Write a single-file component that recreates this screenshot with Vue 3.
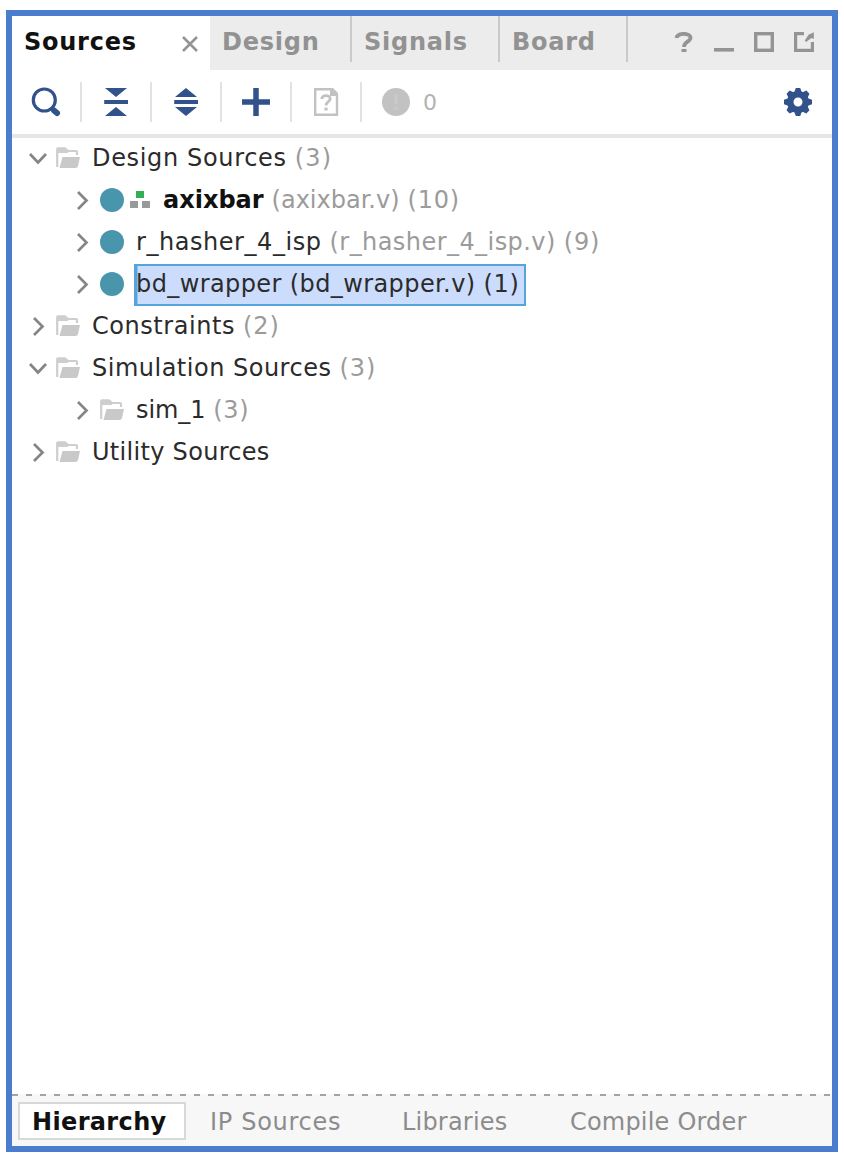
<script setup>
const tabs = [
  { label: 'Sources', cls: 'active' },
  { label: 'Design', cls: 'design' },
  { label: 'Signals', cls: 'signals' },
  { label: 'Board', cls: 'board' },
]

const rows = [
  { level: 0, open: true, icon: 'folder', name: 'Design Sources', ls: 0.66, counts: [{ t: '(3)', ls: 1.2 }] },
  { level: 1, icon: 'module', top: true, name: 'axixbar', ls: 0, counts: [{ t: '(axixbar.v)', ls: 0 }, { t: '(10)', ls: 0.8 }] },
  { level: 1, icon: 'module', name: 'r_hasher_4_isp', ls: 0.55, counts: [{ t: '(r_hasher_4_isp.v)', ls: 0.44 }, { t: '(9)', ls: 0.8 }] },
  { level: 1, icon: 'module', selected: true, name: 'bd_wrapper', ls: 0.4, counts: [{ t: '(bd_wrapper.v)', ls: 0.4 }, { t: '(1)', ls: 0.7 }] },
  { level: 0, icon: 'folder', name: 'Constraints', ls: 0.55, counts: [{ t: '(2)', ls: 1 }] },
  { level: 0, open: true, icon: 'folder', name: 'Simulation Sources', ls: 0.5, counts: [{ t: '(3)', ls: 1 }] },
  { level: 1, icon: 'folder', name: 'sim_1', ls: -0.1, counts: [{ t: '(3)', ls: 0.6 }] },
  { level: 0, icon: 'folder', name: 'Utility Sources', ls: 0.3, counts: [] },
]

const views = [
  { label: 'Hierarchy', cls: 'current' },
  { label: 'IP Sources', cls: 'ip' },
  { label: 'Libraries', cls: 'libs' },
  { label: 'Compile Order', cls: 'order' },
]
</script>

<template>
  <main class="panel">
    <header class="tabs">
      <div v-for="t in tabs" :key="t.label" class="tab" :class="t.cls">
        <span>{{ t.label }}</span>
        <svg v-if="t.cls === 'active'" class="close" width="18" height="18" viewBox="0 0 18 18">
          <path d="M2 2L16 16M16 2L2 16" stroke="#949494" stroke-width="2.6" />
        </svg>
      </div>
      <div class="window-tools">
        <svg width="20" height="20" viewBox="0 0 20 20"><path d="M2.500 6C3.500 0.500 16.500 0.500 16.500 5.800C16.500 10 10 9.500 10 15" fill="none" stroke="#949494" stroke-width="3.800" /><rect x="7.500" y="17" width="5" height="3" fill="#949494" /></svg>
        <svg width="20" height="20" viewBox="0 0 20 20"><path d="M0 17.8H20" stroke="#949494" stroke-width="3.6" /></svg>
        <svg width="20" height="20" viewBox="0 0 20 20"><rect x="1.7" y="1.7" width="16.6" height="16.6" fill="none" stroke="#949494" stroke-width="3.4" /></svg>
        <svg width="20" height="20" viewBox="0 0 20 20">
          <path d="M10 1.6H1.6V18.4H18.4V10" fill="none" stroke="#949494" stroke-width="3.2" />
          <path d="M19.800 0.300V7L17.500 6L12 10L10.800 8.600L14.500 2.800Z" fill="#949494" />
        </svg>
      </div>
    </header>

    <nav class="toolbar">
      <button class="tool"><svg width="30" height="30" viewBox="0 0 30 30"><circle cx="13.300" cy="13" r="11" fill="none" stroke="#32528b" stroke-width="3.2" /><path d="M23 23.500L26 26" stroke="#32528b" stroke-width="6" stroke-linecap="round" /></svg></button>
      <button class="tool"><svg width="30" height="30" viewBox="0 0 30 30" fill="#32528b"><path d="M4 1H26L15 10ZM3.200 13H27V17H3.200ZM4 29H26L15 20Z" /></svg></button>
      <button class="tool"><svg width="30" height="30" viewBox="0 0 30 30" fill="#32528b"><path d="M15 1L26 10H4ZM3.200 13H27V17H3.200ZM15 29L26 20H4Z" /></svg></button>
      <button class="tool"><svg width="30" height="30" viewBox="0 0 30 30"><path d="M15 1V29M1 15H29" stroke="#32528b" stroke-width="5.500" /></svg></button>
      <button class="tool"><svg width="30" height="30" viewBox="0 0 30 30">
        <path d="M4.200 2.200H20L26 8V27.800H4.200Z" fill="none" stroke="#c2c2c2" stroke-width="2.400" />
        <path d="M19 1H22L27 6V9H19Z" fill="#c2c2c2" />
        <path d="M10.800 12C10.800 7.500 19.200 7.500 19.200 11.800C19.200 14.700 15 14.500 15 18.500" fill="none" stroke="#c2c2c2" stroke-width="2.800" />
        <rect x="13.400" y="20.500" width="3.200" height="3" fill="#c2c2c2" />
      </svg></button>
      <div class="messages">
        <svg width="30" height="30" viewBox="0 0 30 30"><circle cx="15" cy="15" r="14" fill="#c2c2c2" /><path d="M15 7V17M15 20V23" stroke="#cacaca" stroke-width="3" /></svg>
        <span>0</span>
      </div>
      <svg class="gear" width="30" height="30" viewBox="-15 -15 30 30" fill="#32528b">
        <circle r="7.700" fill="none" stroke="#32528b" stroke-width="6.400" />
        <path v-for="a in 8" :key="a" :transform="`rotate(${a * 45})`" d="M-4 -9L-2.200 -14H2.200L4 -9Z" />
      </svg>
    </nav>

    <section class="tree">
      <div v-for="r in rows" :key="r.name" class="row" :class="{ child: r.level }">
        <svg class="arrow" width="20" height="20" viewBox="0 0 20 20" fill="none" stroke="#858585" stroke-width="2.700">
          <path v-if="r.open" d="M2 6L10 14.500L18 6" /><path v-else d="M6 2L14.500 10.500L6 19" />
        </svg>
        <svg v-if="r.icon === 'folder'" class="icon" width="24" height="24" viewBox="0 0 24 24">
          <path d="M1.200 21V3.500Q1.200 2.300 2.400 2.300H9L12 5H20Q21 5 21 6V9" fill="none" stroke="#cecece" stroke-width="2.200" />
          <path d="M2 2H9L12 5V7H2Z" fill="#cecece" />
          <path d="M6.500 11H24L22 20Q21.700 22 19.500 22H3.500Z" fill="#c9c9c9" />
        </svg>
        <svg v-else class="icon" width="24" height="24" viewBox="0 0 24 24"><circle cx="12" cy="12" r="12" fill="#4995ac" /></svg>
        <svg v-if="r.top" class="hier" width="20" height="18" viewBox="0 0 20 18">
          <rect x="6" y="0" width="8" height="7" fill="#36ae56" /><path d="M0 10H8V17H0ZM12 10H20V17H12Z" fill="#97999b" />
        </svg>
        <span class="label" :class="{ selected: r.selected, bold: r.top }">
          <span class="name" :style="{ letterSpacing: r.ls + 'px' }">{{ r.name }}</span>
          <span v-for="c in r.counts" :key="c.t" class="count" :style="{ letterSpacing: c.ls + 'px' }">{{ c.t }}</span>
        </span>
      </div>
    </section>

    <footer class="views">
      <svg class="divider" width="820" height="2"><path d="M0 1H820" stroke="#a3a3a3" stroke-width="2" stroke-dasharray="6 8" /></svg>
      <div v-for="v in views" :key="v.label" class="view" :class="v.cls">{{ v.label }}</div>
    </footer>
  </main>
</template>

<style>
body { background: #fff; }
</style>

<style scoped>
.panel {
  box-sizing: border-box;
  width: 832px;
  height: 1142px;
  margin: 10px 0 0 6px;
  border: 6px solid #4a7dce;
  display: flex;
  flex-direction: column;
  background: #fff;
  font-family: "DejaVu Sans", sans-serif;
  font-size: 24px;
  line-height: 28px;
  white-space: nowrap;
}
.tabs { display: flex; height: 54px; background: #ececec; color: #929292; font-weight: bold; }
.tab { box-sizing: border-box; height: 46px; padding: 12px 0 0 12px; border-right: 2px solid #cacaca; letter-spacing: .75px; }
.active { display: flex; justify-content: space-between; width: 198px; height: 54px; padding-right: 11px; border: 0; background: #fff; color: #111; }
.close { margin-top: 7px; }
.design { width: 142px; }
.signals { width: 148px; }
.board { width: 128px; }
.window-tools { display: flex; gap: 20px; margin: 16px 18px 0 auto; }
.toolbar { display: flex; align-items: center; box-sizing: border-box; flex: none; height: 68px; border-bottom: 4px solid #e6e6e6; }
.tool { display: flex; align-items: center; box-sizing: border-box; width: 70px; height: 40px; padding: 0 0 0 19px; border: 0; border-right: 2px solid #e2e2e2; background: none; }
.tool svg { display: block; }
.messages { display: flex; align-items: center; gap: 12px; padding-left: 19px; color: #b2b2b2; font-size: 22px; }
.messages span { padding-top: 2px; }
.gear { margin: 0 19px 0 auto; }
.tree { flex: 1; margin-top: -1px; }
.row { display: flex; align-items: center; height: 42px; padding-left: 16px; }
.child { padding-left: 60px; }
.arrow { margin-right: 8px; }
.hier { margin-left: 6px; }
.label { box-sizing: border-box; display: flex; gap: 8px; height: 40px; margin-left: 10px; padding: 4px 4px 0 2px; border: 2px solid transparent; border-width: 2px 2px 2px 0; color: #2b2b2b; }
.bold { margin-left: 11px; }
.bold .name { font-weight: bold; color: #111; }
.count { color: #9b9b9b; }
.selected { height: 42px; margin-top: 2px; border: 2px solid #56a4dd; padding-left: 0; background: #cbdcfd; box-shadow: inset 1.500px 0 #56a4dd; }
.selected .count { color: #2b2b2b; }
.views { position: relative; box-sizing: border-box; display: flex; align-items: flex-start; height: 52px; padding: 8px 0 0 6px; background: #f7f7f7; color: #8c8c8c; }
.divider { position: absolute; left: 0; top: 0; }
.view { box-sizing: border-box; height: 38px; padding-top: 6px; letter-spacing: .6px; }
.current { width: 168px; padding-left: 12px; padding-top: 4px; border: 2px solid #d8d8d8; background: #fff; color: #111; font-weight: bold; letter-spacing: .35px; }
.ip { width: 192px; padding-left: 24px; letter-spacing: .7px; }
.libs { width: 169px; padding-left: 24px; letter-spacing: .2px; }
.order { padding-left: 23px; letter-spacing: .2px; }
</style>
